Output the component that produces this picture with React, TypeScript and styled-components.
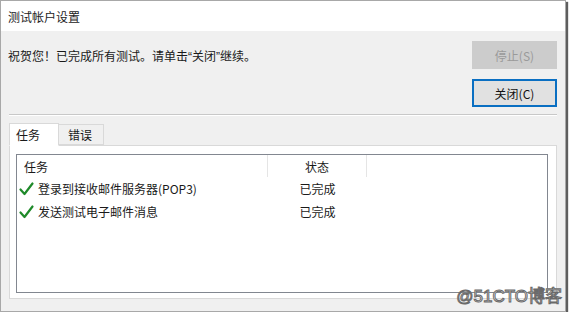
import React from 'react';
import styled, { createGlobalStyle } from 'styled-components';

const GlobalStyle = createGlobalStyle`
  html, body {
    margin: 0;
    padding: 0;
    background: #ffffff;
  }
  body {
    font-family: "Noto Sans CJK SC", "Noto Sans", "Liberation Sans", sans-serif;
    font-size: 12px;
    color: #1a1a1a;
  }
`;

const Window = styled.div`
  position: relative;
  width: 564px;
  height: 310px;
  display: flex;
  flex-direction: column;
  background: #f0f0f0;
  border: 1px solid #a8a8a8;
  box-shadow: 2px 2px 1px rgba(40, 40, 40, 0.75);
  overflow: hidden;
`;

const TitleBar = styled.div`
  height: 30px;
  background: #ffffff;
  display: flex;
  align-items: center;
  padding-left: 7px;
  font-size: 12px;
  color: #222;
`;

const Body = styled.div`
  flex: 1;
  display: flex;
  flex-direction: column;
  padding: 10px 8px 12px 7px;
`;

const TopRow = styled.div`
  display: flex;
  justify-content: space-between;
`;

const Message = styled.div`
  padding-top: 6px;
  font-family: "Liberation Sans", "Noto Sans CJK SC", sans-serif;
  font-size: 12px;
  color: #1a1a1a;
`;

const ButtonColumn = styled.div`
  display: flex;
  flex-direction: column;
  gap: 10px;
`;

const DialogButton = styled.button<{ $primary?: boolean; $disabled?: boolean }>`
  width: 85px;
  height: 28px;
  box-sizing: border-box;
  font-family: inherit;
  font-size: 12px;
  padding: 0;
  background: ${({ $disabled }) => ($disabled ? '#cccccc' : '#e1e1e1')};
  color: ${({ $disabled }) => ($disabled ? '#9a9a9a' : '#111')};
  border: ${({ $primary, $disabled }) =>
    $primary ? '2px solid #0a6fc2' : $disabled ? '1px solid #cccccc' : '1px solid #adadad'};
`;

const Separator = styled.div`
  height: 1px;
  background: #c8c8c8;
  border-bottom: 1px solid #ffffff;
  margin: 7px 0 6px 1px;
`;

const TabStrip = styled.div`
  display: flex;
  align-items: flex-end;
  height: 23px;
  margin-left: 1px;
  position: relative;
  z-index: 1;
`;

const Tab = styled.div<{ $active?: boolean }>`
  box-sizing: border-box;
  height: ${({ $active }) => ($active ? '23px' : '21px')};
  width: ${({ $active }) => ($active ? '50px' : '45px')};
  display: flex;
  align-items: center;
  padding-left: ${({ $active }) => ($active ? '6px' : '9px')};
  background: ${({ $active }) => ($active ? '#ffffff' : '#f0f0f0')};
  border: 1px solid #d9d9d9;
  border-bottom: ${({ $active }) => ($active ? '1px solid #ffffff' : '1px solid #d9d9d9')};
  border-left: ${({ $active }) => ($active ? '1px solid #d9d9d9' : 'none')};
  margin-bottom: ${({ $active }) => ($active ? '-1px' : '0')};
  font-size: 12px;
`;

const TabPanel = styled.div`
  flex: 1;
  margin-left: 1px;
  background: #ffffff;
  border: 1px solid #d9d9d9;
  padding: 8px 8px 5px 6px;
  display: flex;
`;

const ListView = styled.div`
  flex: 1;
  background: #ffffff;
  border: 1px solid #828790;
  display: flex;
  flex-direction: column;
`;

const Grid = styled.div`
  display: grid;
  grid-template-columns: 251px 99px 1fr;
`;

const HeaderCell = styled.div<{ $center?: boolean }>`
  height: 22px;
  display: flex;
  align-items: center;
  justify-content: ${({ $center }) => ($center ? 'center' : 'flex-start')};
  padding-left: ${({ $center }) => ($center ? '0' : '7px')};
  border-right: 1px solid #e5e5e5;
  color: #1a1a1a;
`;

const Cell = styled.div<{ $center?: boolean }>`
  height: 23px;
  display: flex;
  align-items: center;
  justify-content: ${({ $center }) => ($center ? 'center' : 'flex-start')};
  padding-left: ${({ $center }) => ($center ? '0' : '2px')};
  gap: 4px;
`;

const Watermark = styled.div`
  position: absolute;
  right: 3px;
  bottom: 4px;
  font-family: "Liberation Sans", "Noto Sans CJK SC", sans-serif;
  font-size: 17px;
  color: #ffffff;
  -webkit-text-stroke: 1px #6a6a6a;
`;

const Check = () => (
  <svg width="15" height="14" viewBox="0 0 15 14">
    <path d="M1.5 7.5 L5.5 12 L13.5 1.5" fill="none" stroke="#1f8a2a" strokeWidth="2.2" strokeLinecap="round" strokeLinejoin="round" />
  </svg>
);

const tasks = [
  { name: '登录到接收邮件服务器(POP3)', status: '已完成' },
  { name: '发送测试电子邮件消息', status: '已完成' },
];

export default function App() {
  return (
    <>
      <GlobalStyle />
      <Window>
        <TitleBar>测试帐户设置</TitleBar>
        <Body>
          <TopRow>
            <Message>祝贺您！已完成所有测试。请单击“关闭”继续。</Message>
            <ButtonColumn>
              <DialogButton $disabled>停止(S)</DialogButton>
              <DialogButton $primary>关闭(C)</DialogButton>
            </ButtonColumn>
          </TopRow>
          <Separator />
          <TabStrip>
            <Tab $active>任务</Tab>
            <Tab>错误</Tab>
          </TabStrip>
          <TabPanel>
            <ListView>
              <Grid>
                <HeaderCell>任务</HeaderCell>
                <HeaderCell $center>状态</HeaderCell>
                <div />
                {tasks.map((t) => (
                  <React.Fragment key={t.name}>
                    <Cell>
                      <Check />
                      {t.name}
                    </Cell>
                    <Cell $center>{t.status}</Cell>
                    <div />
                  </React.Fragment>
                ))}
              </Grid>
            </ListView>
          </TabPanel>
        </Body>
        <Watermark>@51CTO博客</Watermark>
      </Window>
    </>
  );
}
